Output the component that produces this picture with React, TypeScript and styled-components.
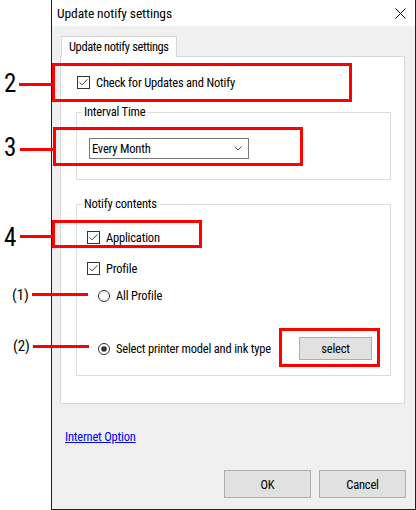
import React from "react";
import styled, { createGlobalStyle } from "styled-components";

const GlobalStyle = createGlobalStyle`
  html, body { margin: 0; padding: 0; background: #ffffff; }
  body {
    font-family: "Roboto Condensed", Roboto, "Liberation Sans", sans-serif;
    font-size: 12.5px;
    font-weight: 375;
    letter-spacing: -0.2px;
    color: #000;
  }
  * { box-sizing: border-box; }
`;

const Stage = styled.div`
  position: relative;
  width: 416px;
  height: 510px;
  overflow: hidden;
  display: flex;
`;

const Gutter = styled.div`
  flex: none;
  width: 51px;
`;

const Dialog = styled.div`
  flex: none;
  width: 365px;
  height: 510px;
  border: 1px solid #1e1e1e;
  border-top: none;
  background: #f0f0f0;
  display: flex;
  flex-direction: column;
`;

const TitleBar = styled.div`
  flex: none;
  height: 26px;
  background: #fff;
  display: flex;
  align-items: center;
  justify-content: space-between;
  padding: 0 9px 0 5px;
`;

const TitleText = styled.span`
  font-size: 13.5px;
  line-height: 16px;
  letter-spacing: -0.1px;
`;

const CloseIcon = styled.svg`
  display: block;
  width: 11px;
  height: 11px;
`;

const TabStrip = styled.div`
  flex: none;
  display: flex;
  margin: 10px 0 0 9px;
`;

const Tab = styled.div`
  position: relative;
  z-index: 1;
  height: 21px;
  margin-bottom: -1px;
  padding: 2px 7px 0 7px;
  line-height: 15px;
  letter-spacing: -0.4px;
  background: #fff;
  border: 1px solid #d9d9d9;
  border-bottom: none;
`;

const TabPage = styled.div`
  flex: none;
  width: 345px;
  height: 348px;
  margin-left: 8px;
  background: #fff;
  border: 1px solid #d9d9d9;
  display: flex;
  flex-direction: column;
`;

const OptionRow = styled.label<{ $top: number; $left: number }>`
  display: flex;
  align-items: center;
  gap: 6px;
  height: 13px;
  margin: ${(p) => p.$top}px 0 0 ${(p) => p.$left}px;
  line-height: 15px;
  white-space: nowrap;
`;

const SelectRow = styled.div`
  display: flex;
  align-items: center;
  height: 23px;
  margin: 35px 0 0 21px;
  white-space: nowrap;
`;

const RadioLabel = styled.span`
  flex: none;
  width: 183px;
  margin-left: 6px;
  line-height: 15px;
`;

const Group = styled.fieldset<{ $top: number; $bottom: number }>`
  width: 315px;
  margin: ${(p) => p.$top}px 0 0 15px;
  padding: 0 0 ${(p) => p.$bottom}px 0;
  border: 1px solid #dcdcdc;
  min-inline-size: 0;
  display: flex;
  flex-direction: column;
`;

const Legend = styled.legend`
  margin-left: 5px;
  padding: 0 2px;
  line-height: 16px;
`;

const Combo = styled.div`
  display: flex;
  align-items: center;
  justify-content: space-between;
  width: 160px;
  height: 21px;
  margin: 18px 0 0 12px;
  padding: 0 6px 0 2px;
  background: #fff;
  border: 1px solid #7a7a7a;
  line-height: 15px;
`;

const Chevron = styled.svg`
  display: block;
  width: 8px;
  height: 5px;
`;

const Button = styled.button<{ $w: number; $h: number }>`
  flex: none;
  width: ${(p) => p.$w}px;
  height: ${(p) => p.$h}px;
  padding: 0;
  background: #e1e1e1;
  border: 1px solid #adadad;
  border-radius: 0;
  font: inherit;
  letter-spacing: inherit;
  color: #000;
`;

const Link = styled.a`
  align-self: flex-start;
  margin: 25px 0 0 13px;
  line-height: 15px;
  color: #0000ff;
  text-decoration: underline;
`;

const Footer = styled.div`
  margin: auto 9px 11px 0;
  display: flex;
  justify-content: flex-end;
  gap: 8px;
`;

/* annotation layer drawn over the screenshot */
const Overlay = styled.div`
  position: absolute;
  inset: 0;
  pointer-events: none;
`;

const RedBox = styled.div<{ $x: number; $y: number; $w: number; $h: number }>`
  position: absolute;
  left: ${(p) => p.$x}px;
  top: ${(p) => p.$y}px;
  width: ${(p) => p.$w}px;
  height: ${(p) => p.$h}px;
  border: 3px solid #ff0000;
`;

const Leader = styled.div<{ $x: number; $y: number; $w: number }>`
  position: absolute;
  left: ${(p) => p.$x}px;
  top: ${(p) => p.$y}px;
  width: ${(p) => p.$w}px;
  height: 3px;
  background: #ff0000;
`;

const Tag = styled.div<{ $x: number; $y: number; $small?: boolean }>`
  position: absolute;
  left: ${(p) => p.$x}px;
  top: ${(p) => p.$y}px;
  font-size: ${(p) => (p.$small ? 15 : 25)}px;
  line-height: ${(p) => (p.$small ? 15 : 25)}px;
  font-weight: 400;
  letter-spacing: 0;
  color: #000;
`;

const CheckBox = () => (
  <svg width="13" height="13" viewBox="0 0 13 13" style={{ flex: "none", display: "block" }}>
    <rect x="0.5" y="0.5" width="12" height="12" fill="#fff" stroke="#333" />
    <path d="M2.6 6.4 L5 8.8 L10.4 3.4" fill="none" stroke="#333" strokeWidth="1" />
  </svg>
);

const Radio = ({ on }: { on?: boolean }) => (
  <svg width="12" height="12" viewBox="0 0 12 12" style={{ flex: "none", display: "block" }}>
    <circle cx="6" cy="6" r="5.5" fill="#fff" stroke="#333" />
    {on && <circle cx="6" cy="6" r="2.8" fill="#333" />}
  </svg>
);

const boxes = [
  { x: 52, y: 63, w: 300, h: 39 },
  { x: 53, y: 127, w: 250, h: 39 },
  { x: 52, y: 220, w: 150, h: 28 },
  { x: 279, y: 328, w: 101, h: 39 },
];

const leaders = [
  { x: 19, y: 83, w: 34 },
  { x: 20, y: 148, w: 34 },
  { x: 20, y: 235, w: 33 },
  { x: 32, y: 293, w: 56 },
  { x: 33, y: 345, w: 56 },
];

const tags = [
  { x: 4, y: 71, t: "2" },
  { x: 4, y: 135, t: "3" },
  { x: 4, y: 225, t: "4" },
  { x: 12, y: 288, t: "(1)", small: true },
  { x: 13, y: 339, t: "(2)", small: true },
];

export default function App() {
  return (
    <>
      <GlobalStyle />
      <Stage>
        <Gutter />
        <Dialog>
          <TitleBar>
            <TitleText>Update notify settings</TitleText>
            <CloseIcon viewBox="0 0 11 11">
              <path d="M0.5 0.5 L10.5 10.5 M10.5 0.5 L0.5 10.5" stroke="#000" strokeWidth="1" />
            </CloseIcon>
          </TitleBar>
          <TabStrip>
            <Tab>Update notify settings</Tab>
          </TabStrip>
          <TabPage>
            <OptionRow $top={19} $left={16}>
              <CheckBox />
              <span>Check for Updates and Notify</span>
            </OptionRow>
            <Group $top={15} $bottom={20}>
              <Legend>Interval Time</Legend>
              <Combo>
                <span>Every Month</span>
                <Chevron viewBox="0 0 8 5">
                  <path d="M0.5 0.5 L4 4 L7.5 0.5" fill="none" stroke="#555" strokeWidth="1" />
                </Chevron>
              </Combo>
            </Group>
            <Group $top={16} $bottom={15}>
              <Legend>Notify contents</Legend>
              <OptionRow $top={19} $left={10}>
                <CheckBox />
                <span>Application</span>
              </OptionRow>
              <OptionRow $top={18} $left={10}>
                <CheckBox />
                <span>Profile</span>
              </OptionRow>
              <OptionRow $top={14} $left={21}>
                <Radio />
                <span>All Profile</span>
              </OptionRow>
              <SelectRow>
                <Radio on />
                <RadioLabel>Select printer model and ink type</RadioLabel>
                <Button $w={73} $h={23}>select</Button>
              </SelectRow>
            </Group>
          </TabPage>
          <Link href="#">Internet Option</Link>
          <Footer>
            <Button $w={87} $h={28}>OK</Button>
            <Button $w={87} $h={28}>Cancel</Button>
          </Footer>
        </Dialog>
        <Overlay>
          {boxes.map((b, i) => (
            <RedBox key={i} $x={b.x} $y={b.y} $w={b.w} $h={b.h} />
          ))}
          {leaders.map((l, i) => (
            <Leader key={i} $x={l.x} $y={l.y} $w={l.w} />
          ))}
          {tags.map((t, i) => (
            <Tag key={i} $x={t.x} $y={t.y} $small={t.small}>
              {t.t}
            </Tag>
          ))}
        </Overlay>
      </Stage>
    </>
  );
}
